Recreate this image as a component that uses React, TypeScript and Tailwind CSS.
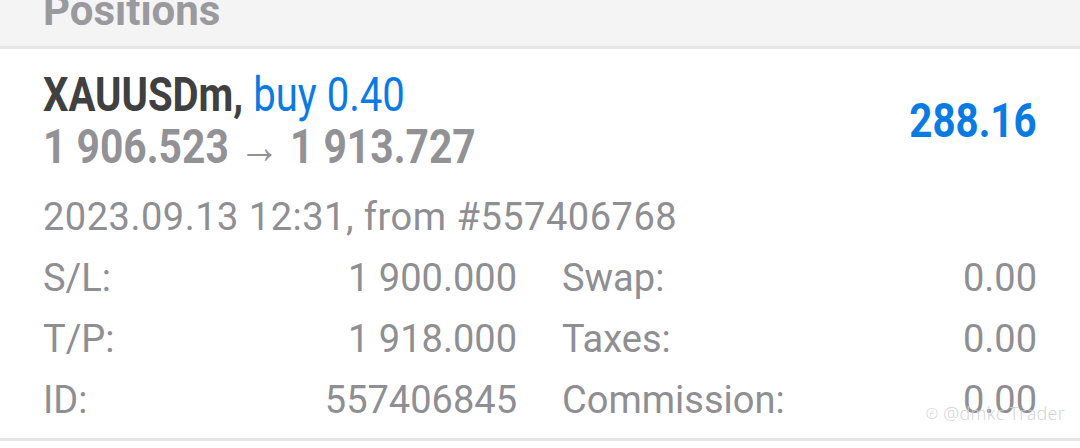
import { ReactNode } from "react"

const rows: [string, string, string, string][] = [
  ["S/L:", "1 900.000", "Swap:", "0.00"],
  ["T/P:", "1 918.000", "Taxes:", "0.00"],
  ["ID:", "557406845", "Commission:", "0.00"],
]

function Cond({ children, className }: { children: ReactNode; className?: string }) {
  return <span className={"inline-block origin-left whitespace-nowrap " + (className ?? "")}>{children}</span>
}

export default function App() {
  return (
    <div className="relative w-[1080px] h-[448px] overflow-hidden bg-white font-['Roboto',sans-serif]">
      <div className="h-[49px] bg-[#f4f4f4] border-b-[3px] border-[#e6e6e6] overflow-hidden">
        <div className="pl-[43px] -mt-[13px] text-[42px] leading-[48px] font-bold text-[#9a9a9e]">Positions</div>
      </div>

      <div className="px-[43px] border-b-[3px] border-[#e6e6e6]">
        <div className="flex items-start justify-between pt-[20px] h-[143px]">
          <div className="flex flex-col">
            <div className="h-[52px] text-[48px] leading-[52px] font-bold">
              <Cond className="scale-x-[0.835]">
                <span className="text-[#404040]">XAUUSDm, </span>
                <span className="font-normal text-[#0a7be2]">buy 0.40</span>
              </Cond>
            </div>
            <div className="h-[52px] text-[48px] leading-[52px] font-bold text-[#929296]">
              <Cond className="scale-x-[0.85]">1 906.523 → 1 913.727</Cond>
            </div>
          </div>
          <div className="mt-[26px] text-[48px] leading-[52px] font-bold text-[#0a7be2]">
            <span className="inline-block origin-right scale-x-[0.84]">288.16</span>
          </div>
        </div>

        <div className="text-[38px] leading-[62px] text-[#8e8e93] tracking-[0.5px] -mt-[6px]">
          2023.09.13 12:31, from #557406768
        </div>

        <div className="flex flex-col pb-[7px]">
          {rows.map(([l1, v1, l2, v2]) => (
            <div key={l1} className="grid grid-cols-[474px_1fr] h-[61px] items-center text-[38px] text-[#8e8e93]">
              <div className="flex justify-between">
                <span>{l1}</span>
                <span>{v1}</span>
              </div>
              <div className="flex justify-between pl-[45px]">
                <span>{l2}</span>
                <span>{v2}</span>
              </div>
            </div>
          ))}
        </div>
      </div>

      <div className="absolute right-[15px] top-[402px] flex items-center gap-[5px] text-[18px] leading-[22px] text-[#d2d2d2] font-['Open_Sans',sans-serif] font-light tracking-[0.3px]">
        <svg width="12" height="13" viewBox="0 0 16 16" fill="none" stroke="#dedede" strokeWidth="1.4">
          <circle cx="8" cy="8" r="7" />
          <path d="M6 12 C6 9 7 6 10 4.5 M5 8 H10" />
        </svg>
        <span>@dmkc Trader</span>
      </div>
    </div>
  )
}
